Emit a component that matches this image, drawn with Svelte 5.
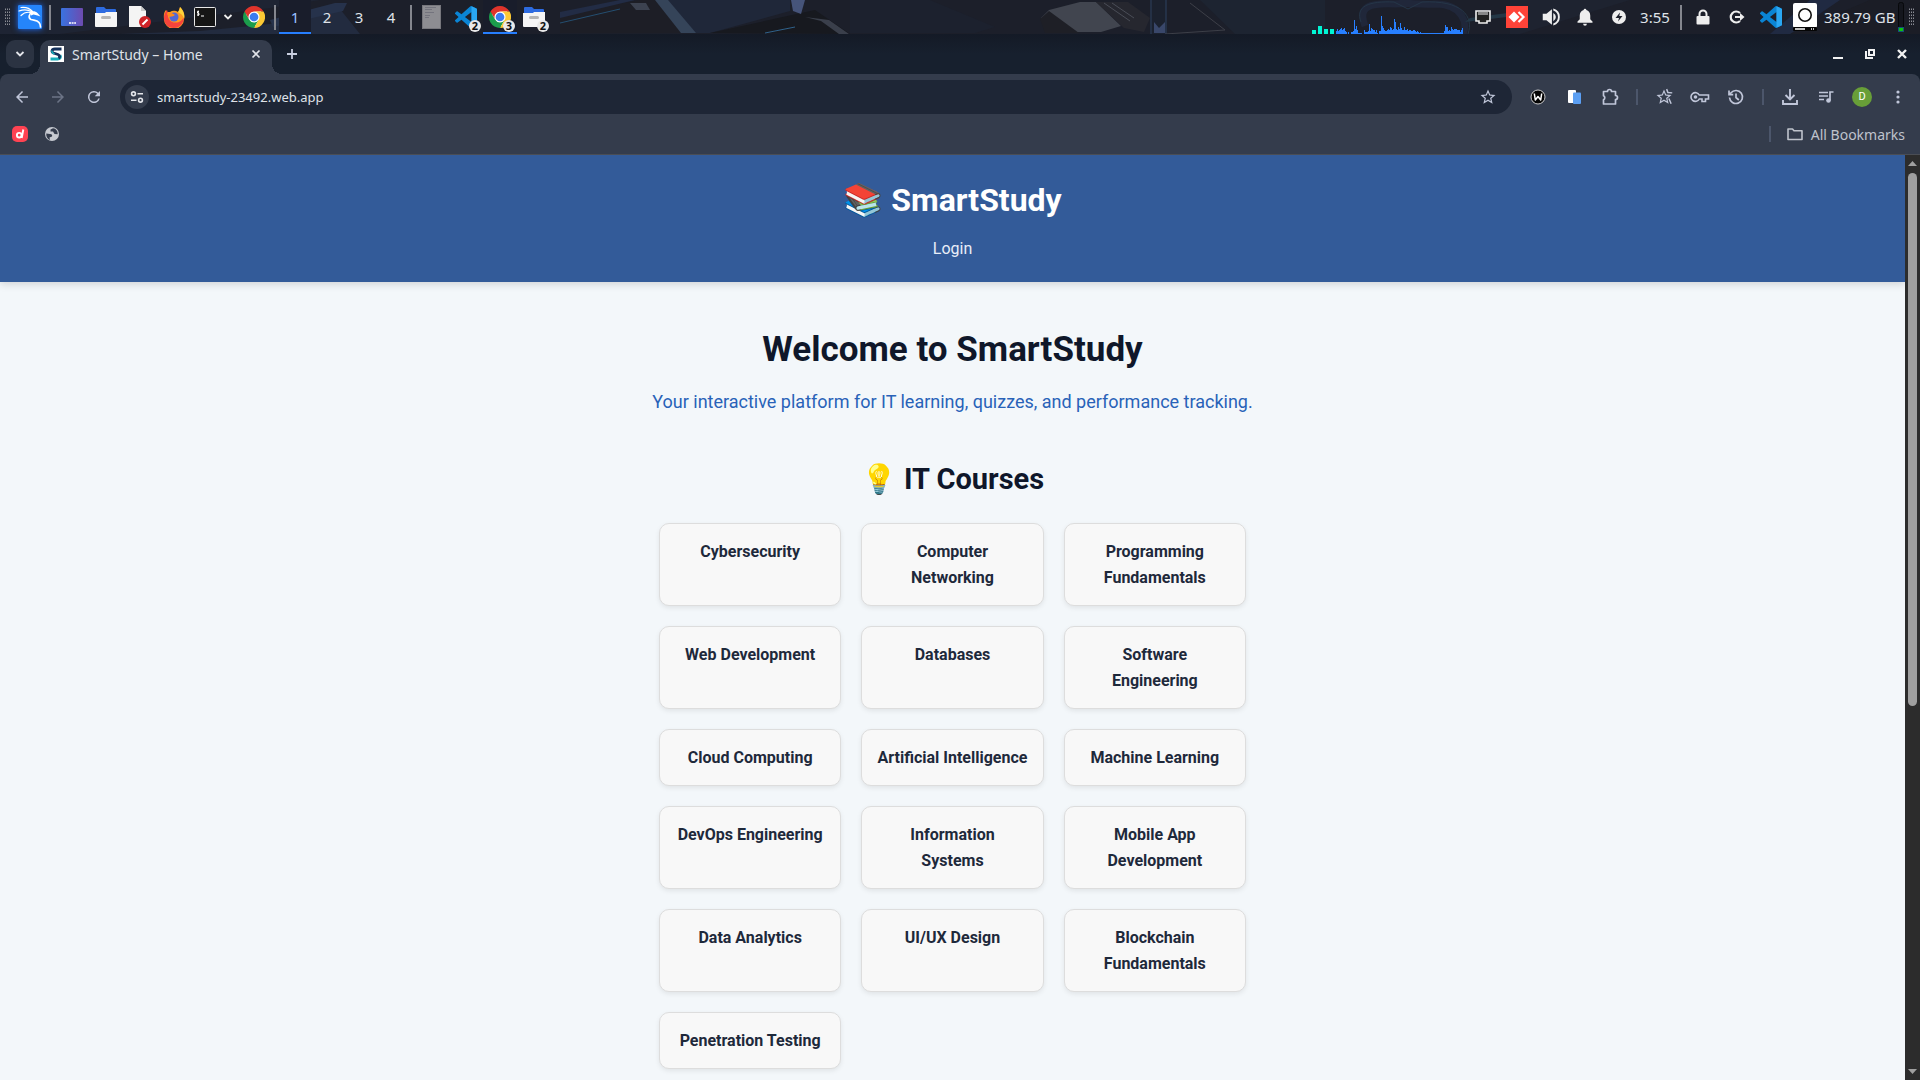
<script>
  const courses = [
    'Cybersecurity', 'Computer Networking', 'Programming Fundamentals',
    'Web Development', 'Databases', 'Software Engineering',
    'Cloud Computing', 'Artificial Intelligence', 'Machine Learning',
    'DevOps Engineering', 'Information Systems', 'Mobile App Development',
    'Data Analytics', 'UI/UX Design', 'Blockchain Fundamentals',
    'Penetration Testing'
  ];
  const workspaces = [1, 2, 3, 4];
  const cores = [4, 8, 5, 5];
  const load = [
    3, 5, 3, 4, 5, 6, 4, 5, 6, 3, 2, 0, 2, 0, 0, 2, 2, 3, 14, 5, 8, 4, 1, 1, 1, 1, 0, 0, 4, 2, 2, 2, 3, 10, 3, 6, 5, 4, 4, 2, 4, 1, 0, 3,
    3, 18, 8, 6, 4, 3, 3, 4, 5, 4, 7, 6, 4, 5, 15, 12, 5, 4, 7, 5, 11, 6, 4, 4, 7, 4, 4, 5, 3, 4, 4, 3, 3, 4, 4, 3, 2, 3, 2, 1, 2, 1,
    1, 1, 1, 1, 1, 1, 1, 1, 1, 1, 1, 1, 1, 1, 1, 1, 1, 1, 1, 1, 1, 1, 3, 9, 7, 7, 3, 4, 3, 7, 5, 4, 5, 5, 5, 4, 4, 4, 2, 4, 6
  ];
</script>

{#snippet chrome()}
  <svg width="22" height="22" viewBox="0 0 48 48" aria-hidden="true">
    <circle cx="24" cy="24" r="20" fill="#fff" />
    <path fill="#e0342b" d="M24 12h20.78A24 24 0 0 0 3.22 12L13.6 30A12 12 0 0 1 24 12z" />
    <path fill="#1b9d4c" d="M34.39 30 24 48A24 24 0 0 1 3.22 12L13.6 30a12 12 0 0 0 20.79 0z" />
    <path fill="#fcc934" d="M34.39 30A12 12 0 0 0 24 12h20.79A24 24 0 0 1 24 48z" />
    <circle cx="24" cy="24" r="9.5" fill="#3b7cf0" />
  </svg>
{/snippet}

{#snippet vscode()}
  <svg width="22" height="22" viewBox="0 0 24 24" aria-hidden="true">
    <path fill="#0a84d4" d="M23.15 2.587 18.21.21a1.494 1.494 0 0 0-1.705.29l-9.46 8.63-4.12-3.128a.999.999 0 0 0-1.276.057L.327 7.261A1 1 0 0 0 .326 8.74L3.899 12 .326 15.26a1 1 0 0 0 .001 1.479L1.65 17.94a.999.999 0 0 0 1.276.057l4.12-3.128 9.46 8.63a1.492 1.492 0 0 0 1.704.29l4.942-2.377A1.5 1.5 0 0 0 24 20.06V3.939a1.5 1.5 0 0 0-.85-1.352zm-5.146 14.861L10.826 12l7.178-5.448z" />
    <path fill="#2aa7f3" d="M18 .2 23.15 2.6A1.5 1.5 0 0 1 24 4v16a1.5 1.5 0 0 1-.85 1.4L18 23.8z" />
  </svg>
{/snippet}

{#snippet files()}
  <svg width="24" height="22" viewBox="0 0 24 22" aria-hidden="true">
    <path fill="#2d6be0" d="M2 2a1 1 0 0 1 1-1h7l2 2h9a1 1 0 0 1 1 1v5H2z" />
    <path fill="#f5f5f5" d="M1 7h10l1-1h11v14a1 1 0 0 1-1 1H2a1 1 0 0 1-1-1z" />
    <rect x="7" y="10" width="10" height="3" rx="1.5" fill="#b5b5b5" />
  </svg>
{/snippet}

{#snippet star()}
  <path fill="currentColor" d="M22 9.24l-7.19-.62L12 2 9.19 8.63 2 9.24l5.46 4.73L5.82 21 12 17.27 18.18 21l-1.63-7.03L22 9.24zM12 15.4l-3.76 2.27 1-4.28-3.32-2.88 4.38-.38L12 6.1l1.71 4.04 4.38.38-3.32 2.88 1 4.28L12 15.4z" />
{/snippet}

{#snippet grip()}
  <svg class="grip" width="6" height="18" viewBox="0 0 6 18" aria-hidden="true">
    {#each [0, 3, 6, 9, 12, 15] as y}
      {#each [0, 2, 4] as x}<rect {x} y={y + 0.5} width="1" height="1.5" fill="#8b8d95" />{/each}
    {/each}
  </svg>
{/snippet}

<div class="screen">
  <div class="panel">
    <svg class="wallpaper" viewBox="0 0 1920 34" preserveAspectRatio="none" aria-hidden="true">
      <rect width="1920" height="34" fill="#1c1f2a" />
      <path d="M60 34 270 8l50-8H0v34z" fill="#1e2433" />
      <path d="M120 34 200 31l80-8 60-14 20 25z" fill="#222b3f" />
      <path d="M270 20 335 3l12 0-4 8-70 16z" fill="#26324b" />
      <path d="M560 14 640 0H665l15 33H560z" fill="#1d1e26" />
      <path d="M560 12 620 0H635l-75 18z" fill="#222c45" />
      <path d="M655 0h14l36 33h-24z" fill="#354459" />
      <path d="M668 0H790l0 11-80 22h-14z" fill="#1f2739" />
      <path d="M710 33 815 10l35 24z" fill="#17191f" />
      <path d="M765 33l30-6" stroke="#2f618a" fill="none" />
      <path d="M560 23l60-14" stroke="#244e70" fill="none" />
      <path d="M791 0h14l-4 14-8-3z" fill="#46547a" />
      <path d="M805 17l24 3 20 14h-10l-18-13z" fill="#3a3f4b" />
      <path d="M630 3h16l4 7h-14z" fill="#3c4250" />
      <path d="M850 0h80l65 27-20 6H850z" fill="#1c212e" />
      <path d="M1041 18l8-8 31-8h16l25 24-20 6h-42z" fill="#41454f" />
      <path d="M1049 11l30 22h-34l-5-14z" fill="#1e1f26" />
      <path d="M1096 2h32l22 16-6 14-20-4z" fill="#26272f" />
      <path d="M1104 3l26 18M1112 3l22 15" stroke="#4a4d57" fill="none" />
      <path d="M1152 0h14v34h-14z" fill="#1b212e" />
      <path d="M1151 0v34M1166 0v34" stroke="#2c4360" fill="none" />
      <path d="M1154 22l5 6 6-6v11h-11z" fill="#39476a" />
      <path d="M1190 3l35 27-60 4" stroke="#3d3f48" fill="none" />
      <path d="M1200 0h125v34h-90z" fill="#1d2431" />
      <path d="M1365 26c-8-20 5-23 30-22 15-2 20 1 40 0 28 0 33 20 28 30" fill="none" stroke="#20273a" stroke-width="7" />
      <path d="M1361 22c-6-16 8-21 33-20l14 7 14-7c40-2 52 14 46 32" fill="none" stroke="#253648" />
      <path d="M1470 18l45-6v4l-50 6z" fill="#233746" />
      <path d="M1510 0h120l-110 34h-10z" fill="#1e2330" />
      <path d="M1790 34l80-34h50v34z" fill="#1b1d26" />
      <path d="M1770 34l40-34h30l-50 34z" fill="#202a42" />
    </svg>
    <div class="group left">
      {@render grip()}
      <button class="kali" aria-label="Applications menu">
        <svg width="24" height="24" viewBox="0 0 24 24">
          <rect width="24" height="24" rx="1" fill="#2585fb" />
          <path d="M1 6c5-2 10-1 13 1M3 2.500c5-.5 9 1 11.500 4M3 10.500c3-3 7-4 11-2.500" fill="none" stroke="#fff" stroke-width="1.200" stroke-linecap="round" />
          <path d="M14 7c-3 2-4 6-1 7.500 3 1 6 .5 8 3 .8 1 1.500 2.500 1.500 4.500" fill="none" stroke="#fff" stroke-width="1.700" stroke-linecap="round" />
          <path d="M13 6.500c3-.5 5 0 6.500 1.500l3 3.500-3-1-4-1-2.500 1z" fill="#fff" />
        </svg>
      </button>
      <span class="bar-sep"></span>
      <button class="launch" aria-label="Show desktop">
        <svg width="22" height="18" viewBox="0 0 22 18">
          <defs><linearGradient id="desk" x2="1"><stop stop-color="#3973e0" /><stop offset="1" stop-color="#6d4bb0" /></linearGradient></defs>
          <rect width="22" height="18" rx="1" fill="url(#desk)" /><path d="M8 15h7" stroke="#fff" stroke-width="1.5" stroke-dasharray="2 .6" />
        </svg>
      </button>
      <button class="launch" aria-label="File manager">{@render files()}</button>
      <button class="launch" aria-label="Text editor">
        <svg width="22" height="22" viewBox="0 0 22 22">
          <path d="M0 0h12l5 5v16H0z" fill="#f4f4f4" /><path d="M12 0l5 5h-5z" fill="#c9c9c9" />
          <circle cx="16" cy="16" r="6" fill="#cf2328" /><path d="M13.500 18.500l5-5" stroke="#fff" stroke-width="2" />
        </svg>
      </button>
      <button class="launch" aria-label="Firefox">
        <svg width="22" height="22" viewBox="0 0 22 22">
          <path d="M17 1c4 4 5 8 4 12a10 10 0 0 1-20 0C.5 9 1 6 3 4l1 2 3 0C10 4 13 5 15 6c1-1 1-3 2-5z" fill="#fd9a23" />
          <path d="M1 12c0-3 1-6 3-8l1 3c-1 8 5 11 11 9 2-1 4-3 5-5 0 6-4 11-10 11S1 18 1 12z" fill="#f5443c" />
          <path d="M17 1c4 4 5 9 4 12-1-4-3-5-6-7 1-1 2-3 2-5z" fill="#ffd43a" />
          <circle cx="11" cy="11" r="4.500" fill="#5267d6" /><path d="M4 7c3-1 5 0 8 2-2 2-4 1-5 2-2-1-3-2-3-4z" fill="#ff8a1c" />
        </svg>
      </button>
      <button class="launch term" aria-label="Terminal">
        <svg width="22" height="20" viewBox="0 0 22 20">
          <rect x=".5" y=".5" width="21" height="19" rx="1" fill="#151515" stroke="#e8e8e8" />
          <path d="M5 4.500H3.500v1.500L5 6.500v1.500H3M4.200 3.500v5.500M7 9h3" fill="none" stroke="#fff" stroke-width="1" />
        </svg>
      </button>
      <button class="drop" aria-label="More terminals">
        <svg width="10" height="8" viewBox="0 0 10 8"><path d="M1.500 2 5 5.500 8.500 2" fill="none" stroke="#eee" stroke-width="1.800" /></svg>
      </button>
      <button class="launch" aria-label="Chrome">{@render chrome()}</button>
      <span class="bar-sep tight"></span>
      {#each workspaces as n}
        <button class="space" class:active={n === 1}>{n}</button>
      {/each}
      <span class="bar-sep tight"></span>
      <button class="task" aria-label="Hidden window">
        <svg width="20" height="24" viewBox="0 0 20 24"><rect x=".5" y=".5" width="18" height="23" fill="#8d8d92" stroke="#77777d" /><path d="M3 2.500h11M3 4.500h7M3 7.500h9M3 10.500h5M3 12.500h4" stroke="#73737d" /></svg>
      </button>
      <button class="task" aria-label="Code, 2 windows">{@render vscode()}<span class="count">2</span></button>
      <button class="task active" aria-label="Chrome, 3 windows">{@render chrome()}<span class="count">3</span></button>
      <button class="task" aria-label="Files, 2 windows">{@render files()}<span class="count">2</span></button>
    </div>
    <div class="group right">
      <svg class="graph" width="153" height="34" viewBox="0 0 153 34" aria-hidden="true">
        {#each cores as h, i}<rect x={i * 6} y={34 - h} width="4" height={h} fill="#00f5d4" />{/each}
        {#each load as h, i}<rect x={24 + i} y={34 - h} width="1" height={h} fill="#277fff" />{/each}
      </svg>
      <button class="tray" aria-label="Network">
        <svg width="16" height="14" viewBox="0 0 16 14"><path d="M1 1h14v10h-3v2H4v-2H1z" fill="#222" stroke="#eee" stroke-width="1.600" /><path d="M4 2v3M6 2v3M8 2v3M10 2v3M12 2v3" stroke="#eee" /></svg>
      </button>
      <button class="tray" aria-label="AnyDesk">
        <svg width="22" height="22" viewBox="0 0 22 22"><rect width="22" height="22" fill="#ff4338" /><path d="M8 5.500 13.500 11 8 16.500 2.500 11z" fill="#fff" /><path d="M12.500 6 17.500 11l-5 5" fill="none" stroke="#fff" stroke-width="2.200" /></svg>
      </button>
      <button class="tray" aria-label="Volume">
        <svg width="22" height="22" viewBox="0 0 24 24"><path fill="#eee" d="M3 8.500v7h4l6 5v-17l-6 5H3zM14.500 7.500v9a5 5 0 0 0 0-9zM14.500 2.800v2.100a7.500 7.500 0 0 1 0 14.200v2.100a9.500 9.500 0 0 0 0-18.400z" /></svg>
      </button>
      <button class="tray" aria-label="Notifications">
        <svg width="18" height="18" viewBox="0 0 24 24"><path fill="#eee" d="M12 23.500a2.500 2.500 0 0 0 2.500-2.500h-5a2.500 2.500 0 0 0 2.500 2.500zM19 15v-5c0-3.500-2-6.500-5.200-7.200a1.800 1.800 0 0 0-3.600 0C7 3.500 5 6.500 5 10v5l-3 3v1.500h20v-1.500z" /></svg>
      </button>
      <button class="tray" aria-label="Power">
        <svg width="14" height="14" viewBox="0 0 14 14"><circle cx="7" cy="7" r="7" fill="#eee" /><path d="M8 2.500 3.500 8H7l-1 3.500L10.500 6H7.300z" fill="#1c1f2a" /></svg>
      </button>
      <span class="clock">3:55</span>
      <span class="bar-sep tray-sep"></span>
      <button class="tray" aria-label="Lock screen">
        <svg width="14" height="16" viewBox="0 0 14 16"><path d="M3.500 8V5a3.500 3.500 0 0 1 7 0v3" fill="none" stroke="#eee" stroke-width="2" /><rect x=".5" y="7" width="13" height="8.500" rx="1" fill="#eee" /></svg>
      </button>
      <button class="tray" aria-label="Log out">
        <svg width="16" height="14" viewBox="0 0 16 14"><path d="M11 3A5.500 5.500 0 1 0 11 11" fill="none" stroke="#eee" stroke-width="2.200" /><path d="M6 6h5V3l4.500 4L11 11V8H6z" fill="#eee" /></svg>
      </button>
      <button class="tray" aria-label="Code">{@render vscode()}</button>
      <button class="tray" aria-label="Disk">
        <svg width="24" height="28" viewBox="0 0 24 28"><rect width="24" height="25" rx="2" fill="#fff" /><circle cx="12" cy="12" r="6.200" fill="none" stroke="#111" stroke-width="1.600" /><rect y="24" width="24" height="4" rx="1" fill="#050505" /><path d="M2 26h10M18 26h1M20 26h1" stroke="#fff" stroke-width="1.500" /></svg>
      </button>
      <span class="disk">389.79 GB</span>
      <svg width="6" height="30" viewBox="0 0 6 30" aria-hidden="true"><rect x=".5" y=".5" width="5" height="29" rx="2" fill="#14161d" stroke="#07080b" /><rect x="0" y="25" width="6" height="5" fill="#14507a" /><rect x="1" y="26" width="4" height="3" fill="#0ec40e" /></svg>
      {@render grip()}
    </div>
  </div>

  <div class="tabs">
    <button class="tab-search" aria-label="Search tabs">
      <svg width="10" height="8" viewBox="0 0 10 8"><path d="M1.500 2 5 5.500 8.500 2" fill="none" stroke="#e3e5ea" stroke-width="1.800" /></svg>
    </button>
    <div class="tab">
      <svg width="16" height="16" viewBox="0 0 16 16" aria-hidden="true">
        <rect width="16" height="16" fill="#fff" />
        <path d="M2.500 13h7.300c2.700 0 3.200-2.300 2.200-3.600" fill="none" stroke="#19aebb" stroke-width="2.800" />
        <path d="M13.500 3H6.800C3.500 3 3.200 6 5.500 7l4.500 1.500c2 .8 2 2.800.5 3.700" fill="none" stroke="#14305a" stroke-width="2.800" />
        <path d="M4 4.500C3.500 7 5 7.500 6.500 8" fill="none" stroke="#19aebb" stroke-width="1.500" />
      </svg>
      <span class="tab-title">SmartStudy – Home</span>
      <button class="plain" aria-label="Close tab"><svg width="10" height="10" viewBox="0 0 10 10"><path d="M1.500 1.500l7 7M8.500 1.500l-7 7" stroke="#e3e5ea" stroke-width="1.700" /></svg></button>
    </div>
    <button class="plain new-tab" aria-label="New tab"><svg width="12" height="12" viewBox="0 0 12 12"><path d="M6 1v10M1 6h10" stroke="#c9cfe0" stroke-width="1.800" /></svg></button>
    <div class="window-buttons">
      <button class="plain" aria-label="Minimize"><svg width="10" height="10" viewBox="0 0 10 10"><path d="M0 9h10" stroke="#f2f2f2" stroke-width="2" /></svg></button>
      <button class="plain" aria-label="Restore"><svg width="10" height="10" viewBox="0 0 10 10"><path d="M4 1h5v5H4zM1 2v7h7" fill="none" stroke="#f2f2f2" stroke-width="2" /></svg></button>
      <button class="plain" aria-label="Close"><svg width="10" height="10" viewBox="0 0 10 10"><path d="M1 1l8 8M9 1l-8 8" stroke="#f2f2f2" stroke-width="2.400" /></svg></button>
    </div>
  </div>

  <div class="browser-bars">
    <div class="toolbar">
      <button class="tool" aria-label="Back"><svg width="18" height="18" viewBox="0 0 24 24"><path fill="currentColor" d="M20 11H7.830l5.590-5.590L12 4l-8 8 8 8 1.410-1.410L7.830 13H20z" /></svg></button>
      <button class="tool" aria-label="Forward" disabled><svg width="18" height="18" viewBox="0 0 24 24"><path fill="currentColor" d="M4 11h12.170l-5.590-5.590L12 4l8 8-8 8-1.410-1.410L16.170 13H4z" /></svg></button>
      <button class="tool" aria-label="Reload"><svg width="18" height="18" viewBox="0 0 24 24"><path fill="currentColor" d="M17.650 6.350A8 8 0 1 0 19.730 14h-2.080A6 6 0 1 1 12 6c1.660 0 3.140.69 4.220 1.780L13 11h7V4z" /></svg></button>
      <div class="omnibox">
        <button class="site" aria-label="View site information">
          <svg width="14" height="12" viewBox="0 0 14 12"><g fill="none" stroke="#e3e5ea" stroke-width="1.600"><circle cx="3.500" cy="2.800" r="1.900" /><path d="M7.500 2.800H13M1 9.200h5.500" /><circle cx="10.500" cy="9.200" r="1.900" /></g></svg>
        </button>
        <input aria-label="Address and search bar" value="smartstudy-23492.web.app" />
        <button class="plain bookmark" aria-label="Bookmark this tab"><svg width="18" height="18" viewBox="0 0 24 24">{@render star()}</svg></button>
      </div>
      <button class="tool" aria-label="W extension"><svg width="16" height="16" viewBox="0 0 16 16"><circle cx="8" cy="8" r="7" fill="#050505" stroke="#ccc" /><path d="M4.300 4.500 5.300 11 8 7.500 10.700 11l1-6.500" fill="none" stroke="#fff" stroke-width="1.500" stroke-linejoin="round" /></svg></button>
      <button class="tool" aria-label="Pages extension"><svg width="14" height="16" viewBox="0 0 14 16"><rect x="1" y="1" width="8" height="13" rx="1" fill="#fff" /><rect x="6" y="3.500" width="8" height="11.500" rx="1" fill="#5b9ff3" /></svg></button>
      <button class="tool" aria-label="Extensions"><svg width="18" height="18" viewBox="0 0 18 18"><path d="M2.500 3.500h4a1.800 1.800 0 1 1 4 0H14.500v4a1.600 1.600 0 1 1 0 4v4.500h-12v-4.300a2.200 2.200 0 0 0 0-4z" fill="none" stroke="currentColor" stroke-width="1.700" stroke-linejoin="round" /></svg></button>
      <span class="tool-sep"></span>
      <button class="tool" aria-label="Bookmarks"><svg width="18" height="18" viewBox="0 0 24 24">{@render star()}<path d="M15.500 1.500l1.700 4.500 5.800.5M18.500 14l3 7" fill="none" stroke="currentColor" stroke-width="2" /></svg></button>
      <button class="tool" aria-label="Passwords"><svg width="20" height="14" viewBox="0 0 20 14"><g fill="none" stroke="currentColor" stroke-width="1.600"><path d="M9.300 5a4.400 4.400 0 1 0 0 4H12v2.500h3.500V9H18.500V5z" /></g><circle cx="5.500" cy="7" r="1.800" fill="currentColor" /></svg></button>
      <button class="tool" aria-label="History"><svg width="18" height="18" viewBox="0 0 18 18"><path d="M2.500 9.500A6.500 6.500 0 1 0 4 4.800L2.500 6.500M2 2.500v4.200h4.200M9 5.500V9.500l2.800 2.500" fill="none" stroke="currentColor" stroke-width="1.700" /></svg></button>
      <span class="tool-sep"></span>
      <button class="tool" aria-label="Downloads"><svg width="18" height="18" viewBox="0 0 18 18"><path d="M9 1v10M4.500 7 9 11.500 13.500 7M2 12v4h14v-4" fill="none" stroke="currentColor" stroke-width="1.900" /></svg></button>
      <button class="tool" aria-label="Media"><svg width="18" height="18" viewBox="0 0 18 18"><path d="M2 4.500h9M2 8h9M2 11.500h5M13 12.500V4h3.500" fill="none" stroke="currentColor" stroke-width="1.700" /><circle cx="11.500" cy="12.500" r="2.300" fill="currentColor" /></svg></button>
      <button class="tool" aria-label="Profile"><span class="avatar">D</span></button>
      <button class="tool" aria-label="Menu"><svg width="4" height="16" viewBox="0 0 4 16"><g fill="currentColor"><circle cx="2" cy="3" r="1.600" /><circle cx="2" cy="8" r="1.600" /><circle cx="2" cy="13" r="1.600" /></g></svg></button>
    </div>
    <div class="bookmarks">
      <button class="plain" aria-label="Bookmark: d"><svg width="16" height="16" viewBox="0 0 16 16"><rect width="16" height="16" rx="5" fill="#ff4352" /><circle cx="7.200" cy="9.200" r="2.300" fill="none" stroke="#fff" stroke-width="1.900" /><path d="M11.300 3.500 9.700 12" stroke="#fff" stroke-width="1.900" /></svg></button>
      <button class="plain globe" aria-label="Bookmark: site"><svg width="16" height="16" viewBox="0 0 16 16"><circle cx="8" cy="8" r="7" fill="#c6c9d0" /><path d="M2.300 7.500 6 8c2 0 2.500 1 2 2.500l-2.500 1 .5 2.500C3 13 2 10 2.300 7.500zM9 2.200 6.500 3.500v2H9l1.500 2.500 3.200.3C14 5 12 2.500 9 2.200z" fill="#343c4c" /></svg></button>
      <span class="tool-sep"></span>
      <button class="plain all"><svg width="16" height="14" viewBox="0 0 16 14" aria-hidden="true"><path d="M1 12V2h4.500L7 3.800h8V12.500H1z" fill="none" stroke="#bfc3cc" stroke-width="1.600" stroke-linejoin="round" /></svg>All Bookmarks</button>
    </div>
  </div>

  <div class="viewport">
    <div class="page">
      <header>
        <h1><span class="emoji">📚</span> SmartStudy</h1>
        <nav><a href="#login">Login</a></nav>
      </header>
      <main>
        <h2>Welcome to SmartStudy</h2>
        <p>Your interactive platform for IT learning, quizzes, and performance tracking.</p>
        <h3><span class="emoji">💡</span> IT Courses</h3>
        <div class="courses">
          {#each courses as course}
            <a class="course" href="#course">{course}</a>
          {/each}
        </div>
      </main>
    </div>
    <div class="scrollbar" aria-hidden="true">
      <svg width="9" height="5" viewBox="0 0 9 5"><path d="M4.500 0 9 5H0z" fill="#9f9f9f" /></svg>
      <span class="thumb"></span>
      <svg width="9" height="5" viewBox="0 0 9 5"><path d="M0 0h9L4.500 5z" fill="#9f9f9f" /></svg>
    </div>
  </div>
</div>

<style>
  :global(body) { margin: 0; overflow: hidden; }
  * { box-sizing: border-box; }
  svg { display: block; flex: none; }
  button {
    display: flex; align-items: center; justify-content: center;
    margin: 0; padding: 0; border: 0; background: none; color: inherit; font: inherit;
  }
  .screen {
    height: 100vh; display: flex; flex-direction: column;
    font-family: 'Noto Sans', 'Open Sans', sans-serif; font-size: 14px; color: #dfe2e8;
  }

  .panel { position: relative; height: 34px; flex: none; display: flex; justify-content: space-between; }
  .wallpaper { position: absolute; inset: 0; width: 100%; height: 100%; }
  .group { position: relative; display: flex; align-items: center; font-size: 15px; }
  .left { padding-left: 5px; }
  .right { padding-right: 5px; }
  .group > * { flex: none; }
  .kali { width: 38px; height: 34px; }
  .kali svg { box-shadow: 0 0 6px #1e6fff; }
  .bar-sep { width: 2px; height: 25px; background: #84868e; margin-right: 4px; }
  .launch { width: 34px; height: 34px; }
  .term { width: 28px; }
  .drop { width: 18px; height: 34px; }
  .bar-sep.tight { margin: 0 3px; }
  .space { width: 32px; height: 34px; }
  .active { background: #191d2b; box-shadow: inset 0 -2px #277fff; }
  .space.active { color: #9cc3ff; }
  .task { position: relative; width: 34px; height: 34px; }
  .count {
    position: absolute; right: 2px; bottom: 2px; width: 12px; height: 12px; border-radius: 6px;
    background: #e9e9e9; color: #111; font-size: 11px; font-weight: 700; line-height: 12px; text-align: center;
  }
  .tray { width: 34px; height: 34px; }
  .graph { margin-right: 1px; }
  .clock { width: 38px; text-align: center; }
  .tray-sep { margin: 0 4px 0 6px; }
  .disk { width: 76px; padding-left: 2px; }
  .right > :global(svg:last-child) { margin-left: 5px; }

  .tabs {
    height: 40px; flex: none; display: flex; align-items: center; padding-left: 6px;
    background: linear-gradient(#141a26, #17202e 50%, #17202e);
  }
  .tab-search { width: 28px; height: 28px; border-radius: 9px; background: #2b3342; }
  .tab {
    position: relative; align-self: flex-end; width: 232px; height: 34px; margin-left: 6px; padding: 0 11px 6px 8px;
    display: flex; align-items: center; background: #343c4c; border-radius: 10px 10px 0 0;
  }
  .tab::before, .tab::after { content: ''; position: absolute; bottom: 0; width: 10px; height: 10px; }
  .tab::before { right: 100%; background: radial-gradient(circle at 0 0, transparent 10px, #343c4c 10px); }
  .tab::after { left: 100%; background: radial-gradient(circle at 100% 0, transparent 10px, #343c4c 10px); }
  .tab-title { flex: 1; margin-left: 8px; white-space: nowrap; }
  .new-tab { width: 40px; height: 40px; }
  .window-buttons { margin-left: auto; display: flex; gap: 22px; padding-right: 13px; }

  .browser-bars { flex: none; background: #17202e; border-bottom: 1px solid #4a4d54; }
  .toolbar { display: flex; align-items: center; height: 46px; padding: 0 4px; background: #343c4c; border-radius: 8px 8px 0 0; }
  .tool { width: 36px; height: 36px; color: #c0c6d9; }
  .tool:disabled { color: #6c7486; }
  .tool-sep { width: 2px; height: 16px; margin: 0 8px; background: #4c566b; }
  .omnibox { flex: 1; height: 34px; margin: 0 8px; padding: 0 15px 0 5px; display: flex; align-items: center; gap: 8px; background: #1e2636; border-radius: 17px; }
  .site { width: 24px; height: 24px; border-radius: 12px; background: #343c4c; }
  .omnibox input { flex: 1; min-width: 0; padding: 0; border: 0; outline: 0; background: none; color: #dfe2e8; font: inherit; font-size: 13px; }
  .bookmark { color: #c0c6d9; }
  .avatar { width: 20px; height: 20px; border-radius: 10px; background: #689f38; color: #fff; font: 11px/20px Roboto, sans-serif; }
  .bookmarks { display: flex; align-items: center; height: 34px; padding: 0 15px 6px 12px; background: #343c4c; }
  .globe { margin: 0 auto 0 16px; }
  .all { gap: 8px; margin-left: 8px; color: #bfc3cc; white-space: nowrap; }

  .viewport { flex: 1; min-height: 0; display: flex; }
  .page { flex: 1; overflow: hidden; background: #f3f7fa; font-family: Roboto, sans-serif; font-size: 16px; color: #1e293b; text-align: center; }
  header { padding: 20px; background: #335b99; color: #fff; box-shadow: 0 2px 8px rgba(0, 0, 0, 0.15); }
  h1, h2, h3, p { margin: 0; }
  h1 { font-size: 32px; line-height: 51px; }
  nav { margin-top: 10px; line-height: 26px; }
  nav a { color: #e8eef8; text-decoration: none; }
  main { display: flex; flex-direction: column; align-items: center; padding-top: 40px; }
  h2 { font-size: 35px; line-height: 56px; color: #0f172a; }
  main p { margin-top: 10px; font-size: 18px; line-height: 28px; color: #2862b8; }
  h3 { margin: 40px 0 21px; font-size: 29px; line-height: 46px; color: #0f172a; }
  .courses { width: 100%; max-width: 587px; display: grid; grid-template-columns: repeat(3, 1fr); gap: 20px; }
  .course {
    padding: 15px 15px 14px; border: 1px solid #ddd; border-radius: 10px; background: #f8f8f8;
    box-shadow: 0 2px 5px rgba(0, 0, 0, 0.08); color: #1e293b; font-weight: 700; line-height: 26px; text-decoration: none;
  }
  .scrollbar { width: 15px; flex: none; display: flex; flex-direction: column; align-items: center; padding: 6px 0 6px; background: #2c2c2c; }
  .thumb { width: 9px; height: 58.4%; margin: 7px 0 auto; border-radius: 5px; background: #9f9f9f; }
</style>
